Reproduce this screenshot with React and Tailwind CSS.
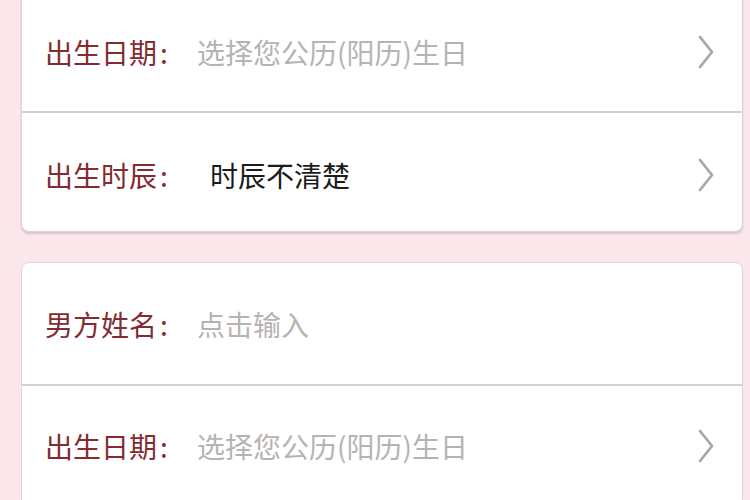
import React from "react";

function Chevron() {
  return (
    <svg width="18" height="36" viewBox="0 0 18 36" className="shrink-0">
      <polyline
        points="3,3 15,18 3,33"
        fill="none"
        stroke="#aca7a1"
        strokeWidth="2.8"
        strokeLinecap="round"
        strokeLinejoin="round"
      />
    </svg>
  );
}

function Row({ label, placeholder, value, arrow, height, divider }) {
  return (
    <div
      className={`flex items-center pl-[23px] pr-[27px] ${height} ${
        divider ? "border-b-2 border-[#d7d0cb]" : ""
      }`}
    >
      <span className="w-[152px] shrink-0 text-[#832b31]">
        {label}
        <span className="ml-[3px]">:</span>
      </span>
      {value ? (
        <span className="ml-[13px] flex-1 text-[#1b1b1b]">{value}</span>
      ) : (
        <span className="flex-1 text-[#b6b3b1]">{placeholder}</span>
      )}
      {arrow && <Chevron />}
    </div>
  );
}

export default function App() {
  return (
    <div
      className="w-[750px] h-[500px] overflow-hidden bg-[#fbe6eb] pl-[21px] pr-[7px] text-[28px] leading-none"
      style={{ fontFamily: '"Noto Sans CJK SC", "Noto Sans", sans-serif' }}
    >
      {/* 出生信息 */}
      <div className="-mt-[9px] rounded-lg border border-[#ddd5d5] bg-white shadow-[0_2px_2px_rgba(120,100,100,0.25)]">
        <Row label="出生日期" placeholder="选择您公历(阳历)生日" arrow height="h-[121px]" divider />
        <Row label="出生时辰" value="时辰不清楚" arrow height="h-[118px] pt-[6px]" />
      </div>

      {/* 男方信息 */}
      <div className="mt-[30px] rounded-lg border border-[#ddd5d5] bg-white">
        <Row label="男方姓名" placeholder="点击输入" height="h-[123px]" divider />
        <Row label="出生日期" placeholder="选择您公历(阳历)生日" arrow height="h-[120px]" />
      </div>
    </div>
  );
}
